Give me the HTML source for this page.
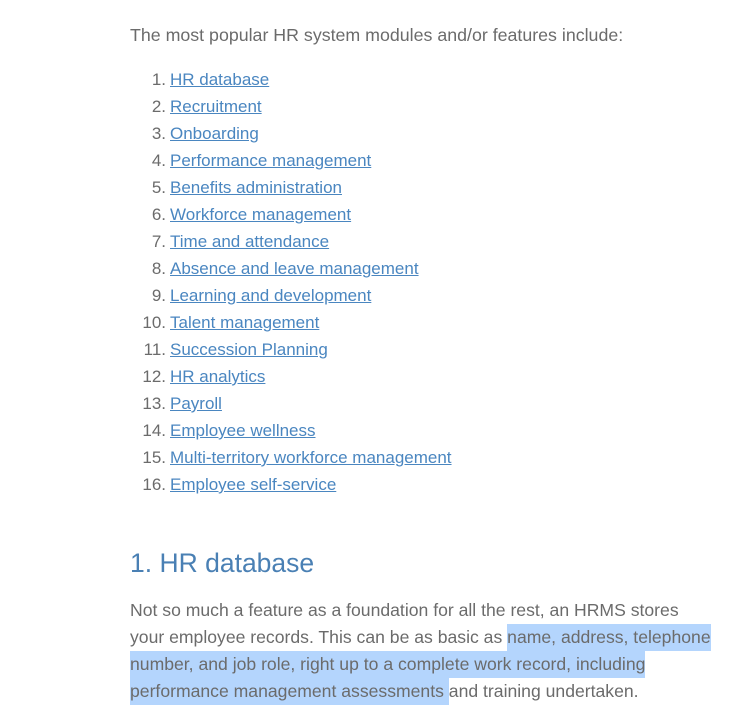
<!DOCTYPE html>
<html><head><style>
body{margin:0;background:#fff;width:735px;height:717px;overflow:hidden;font-family:"Liberation Sans",sans-serif;color:#6b6b6b;font-size:17px;}
.wrap{position:absolute;left:130px;top:0;width:600px;}
p{margin:0;line-height:27px;}
.intro{position:absolute;top:22px;left:0;white-space:nowrap;font-size:17.8px;}
ol{position:absolute;top:66px;left:40px;margin:0;padding:0;list-style:none;}
ol li{line-height:27px;position:relative;}
ol li span{position:absolute;right:100%;margin-right:4px;white-space:nowrap;}
a{color:#4a86c0;text-decoration:underline;}
h2{position:absolute;top:545px;left:0;margin:0;font-weight:normal;font-size:26.5px;color:#4a80b4;line-height:36px;}
.para{position:absolute;top:597px;left:0;width:600px;font-size:17.6px;white-space:nowrap;}
.sel{background:#b4d5fd;padding:3px 0 4px;}
</style></head><body><div class="wrap">
<p class="intro">The most popular HR system modules and/or features include:</p>
<ol>
<li><span>1.</span><a>HR database</a></li>
<li><span>2.</span><a>Recruitment</a></li>
<li><span>3.</span><a>Onboarding</a></li>
<li><span>4.</span><a>Performance management</a></li>
<li><span>5.</span><a>Benefits administration</a></li>
<li><span>6.</span><a>Workforce management</a></li>
<li><span>7.</span><a>Time and attendance</a></li>
<li><span>8.</span><a>Absence and leave management</a></li>
<li><span>9.</span><a>Learning and development</a></li>
<li><span>10.</span><a>Talent management</a></li>
<li><span>11.</span><a>Succession Planning</a></li>
<li><span>12.</span><a>HR analytics</a></li>
<li><span>13.</span><a>Payroll</a></li>
<li><span>14.</span><a>Employee wellness</a></li>
<li><span>15.</span><a>Multi-territory workforce management</a></li>
<li><span>16.</span><a>Employee self-service</a></li>
</ol>
<h2>1. HR database</h2>
<p class="para">Not so much a feature as a foundation for all the rest, an HRMS stores<br>your employee records. This can be as basic as <span class="sel">name, address, telephone</span><br><span class="sel">number, and job role, right up to a complete work record, including</span><br><span class="sel">performance management assessments </span>and training undertaken.</p>
</div></body></html>
